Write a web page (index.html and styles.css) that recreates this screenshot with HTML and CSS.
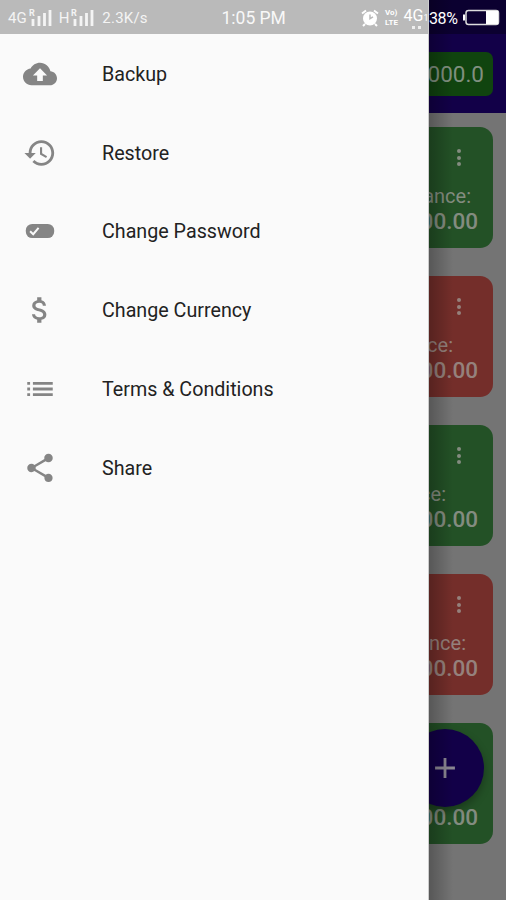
FILE: index.html
```html
<!DOCTYPE html>
<html lang="en">
<head>
    <meta charset="UTF-8">
    <meta name="viewport" content="width=device-width, initial-scale=1.0">
    <title>Accounts</title>
    <link rel="stylesheet" href="styles.css">
</head>
<body>
    <!-- Status bar -->
    <div class="status-bar">
        <div class="network">
            <span>4G</span>
            <svg class="signal" viewBox="0 0 23 20"><text x="0" y="8">R</text><path d="M4 11v7M10 8v10M15.5 5v13M21 2v16"/></svg>
            <span class="net-h">H</span>
            <svg class="signal" viewBox="0 0 23 20"><text x="0" y="8">R</text><path d="M4 11v7M10 8v10M15.5 5v13M21 2v16"/></svg>
            <span class="speed">2.3K/s</span>
        </div>
        <div class="clock">1:05 PM</div>
        <div class="indicators">
            <svg class="alarm" viewBox="0 0 18 18"><circle cx="9" cy="9.5" r="7"/><path class="bells" d="M1 4.5l4-3M17 4.5l-4-3M4 15l-2 2M14 15l2 2"/><path class="hands" d="M9 5.5v4.2l3-1.8"/></svg>
            <div class="volte"><span>Vo)</span><span>LTE</span></div>
            <div class="data"><span>4G<small>1</small></span><i></i></div>
            <span class="percent">38%</span>
            <svg class="battery" viewBox="0 0 38 18"><rect x="4" y="1.5" width="32.5" height="14" rx="2.5"/><path d="M24 2h12v13H24zM1 5.5h2v6H1z"/></svg>
        </div>
    </div>

    <div class="screen">
        <!-- Menu drawer -->
        <nav class="drawer">
            <a class="item">
                <svg viewBox="0 0 24 24"><path d="M19.35 10.04C18.67 6.59 15.64 4 12 4 9.11 4 6.6 5.64 5.35 8.04 2.34 8.36 0 10.91 0 14c0 3.31 2.69 6 6 6h13c2.76 0 5-2.24 5-5 0-2.64-2.05-4.78-4.65-4.96zM14 13v4h-4v-4H7l5-5 5 5h-3z"/></svg>
                <span>Backup</span>
            </a>
            <a class="item">
                <svg viewBox="0 0 24 24"><path d="M13 3c-4.97 0-9 4.03-9 9H1l3.89 3.89.07.14L9 12H6c0-3.87 3.13-7 7-7s7 3.13 7 7-3.13 7-7 7c-1.93 0-3.68-.79-4.94-2.06l-1.42 1.42C8.27 19.99 10.51 21 13 21c4.97 0 9-4.03 9-9s-4.03-9-9-9zm-1 5v5l4.28 2.54.72-1.21-3.5-2.08V8H12z"/></svg>
                <span>Restore</span>
            </a>
            <a class="item">
                <svg viewBox="0 0 24 24"><rect x="2" y="7" width="20" height="10" rx="4.5"/><path class="check" d="M5 12.2l2.2 2.1L11 9.8"/></svg>
                <span>Change Password</span>
            </a>
            <a class="item">
                <svg viewBox="0 0 24 24"><path d="M11.8 10.9c-2.27-.59-3-1.2-3-2.15 0-1.09 1.01-1.85 2.7-1.85 1.78 0 2.44.85 2.5 2.1h2.21c-.07-1.72-1.12-3.3-3.21-3.81V3h-3v2.16c-1.94.42-3.5 1.68-3.5 3.61 0 2.31 1.91 3.46 4.7 4.13 2.5.6 3 1.48 3 2.41 0 .69-.49 1.79-2.7 1.79-2.06 0-2.87-.92-2.98-2.1h-2.2c.12 2.19 1.76 3.42 3.68 3.83V21h3v-2.15c1.95-.37 3.5-1.5 3.5-3.55 0-2.84-2.43-3.81-4.7-4.4z"/></svg>
                <span>Change Currency</span>
            </a>
            <a class="item">
                <svg viewBox="0 0 24 24"><path d="M3 13h2v-2H3v2zm0 4h2v-2H3v2zm0-8h2V7H3v2zm4 4h14v-2H7v2zm0 4h14v-2H7v2zM7 7v2h14V7H7z"/></svg>
                <span>Terms &amp; Conditions</span>
            </a>
            <a class="item">
                <svg viewBox="0 0 24 24"><path d="M18 16.08c-.76 0-1.44.3-1.96.77L8.91 12.7c.05-.23.09-.46.09-.7s-.04-.47-.09-.7l7.05-4.11c.54.5 1.25.81 2.04.81 1.66 0 3-1.34 3-3s-1.34-3-3-3-3 1.34-3 3c0 .24.04.47.09.7L8.04 9.81C7.5 9.31 6.79 9 6 9c-1.66 0-3 1.34-3 3s1.34 3 3 3c.79 0 1.5-.31 2.04-.81l7.12 4.16c-.05.21-.08.43-.08.65 0 1.61 1.31 2.92 2.92 2.92s2.92-1.31 2.92-2.92-1.31-2.92-2.92-2.92z"/></svg>
                <span>Share</span>
            </a>
        </nav>

        <!-- Dimmed page next to the drawer -->
        <main class="page">
            <header class="top">
                <div class="total">000.0</div>
            </header>
            <div class="cards">
                <div class="card green">
                    <div class="dots"><i></i><i></i><i></i></div>
                    <span class="label">ance:</span>
                    <b>00.00</b>
                </div>
                <div class="card red">
                    <div class="dots"><i></i><i></i><i></i></div>
                    <span class="label short">ce:</span>
                    <b>00.00</b>
                </div>
                <div class="card green">
                    <div class="dots"><i></i><i></i><i></i></div>
                    <span class="label shorter">ce:</span>
                    <b>00.00</b>
                </div>
                <div class="card red">
                    <div class="dots"><i></i><i></i><i></i></div>
                    <span class="label medium">nce:</span>
                    <b>00.00</b>
                </div>
                <div class="card green last">
                    <b>00.00</b>
                </div>
            </div>
            <div class="fab"><svg viewBox="0 0 24 24"><path d="M19 13h-6v6h-2v-6H5v-2h6V5h2v6h6v2z"/></svg></div>
        </main>
    </div>
</body>
</html>
```
FILE: styles.css
```css
* {
    margin: 0;
    padding: 0;
    box-sizing: border-box;
}

body {
    position: relative;
    width: 506px;
    height: 900px;
    overflow: hidden;
    font-family: Roboto, sans-serif;
    background: #747474;
}

/* Status bar */
.status-bar {
    position: absolute;
    top: 0;
    left: 0;
    z-index: 3;
    display: flex;
    justify-content: space-between;
    align-items: center;
    width: 100%;
    height: 34px;
    padding: 2px 6px 0 8px;
    color: #fff;
    font-size: 15px;
}

.network,
.indicators {
    display: flex;
    align-items: center;
}

.network {
    width: 213.5px;
    color: #f4f4f4;
}

.signal {
    width: 23px;
    height: 20px;
    margin-left: 2px;
}

.signal text {
    font-size: 9px;
    font-weight: 700;
    fill: #f4f4f4;
}

.signal path {
    stroke: #f4f4f4;
    stroke-width: 2.8;
}

.net-h {
    margin-left: 7px;
}

.speed {
    margin-left: 8px;
    letter-spacing: 0.2px;
}

.clock {
    font-size: 17.5px;
    flex: 1;
    color: #f8f8f8;
}

.alarm {
    width: 18px;
    height: 18px;
    margin-right: 6px;
    fill: #fff;
}

.bells {
    stroke: #fff;
    stroke-width: 2;
}

.hands {
    fill: none;
    stroke: #bababa;
    stroke-width: 1.5;
}

.volte {
    display: flex;
    flex-direction: column;
    width: 18px;
    font-size: 8px;
    font-weight: 700;
    line-height: 10px;
}

.data {
    display: flex;
    flex-direction: column;
    align-items: center;
    width: 26px;
    line-height: 15px;
    font-size: 16px;
    white-space: nowrap;
}

.data small {
    font-size: 9px;
}

.data i {
    width: 9px;
    height: 3px;
    border: solid #eee;
    border-width: 0 3px;
}

.percent {
    width: 33px;
    font-size: 16px;
    letter-spacing: -0.4px;
}

.battery {
    width: 38px;
    height: 18px;
    fill: #fff;
}

.battery rect {
    fill: none;
    stroke: #ddd;
    stroke-width: 1.5;
}

.screen {
    display: flex;
    height: 100%;
}

/* Drawer */
.drawer {
    flex: none;
    width: 429px;
    padding-top: 34.5px;
    background: linear-gradient(#bababa 34px, #fafafa 34px);
    border-right: 1px solid #ccc;
}

.item {
    display: flex;
    align-items: center;
    height: 78.75px;
    padding-left: 23px;
    font-size: 19.7px;
    color: #222;
}

.item span {
    padding-top: 1px;
}

.item svg {
    width: 34px;
    height: 34px;
    margin-right: 45px;
    fill: #858585;
}

.item .check {
    fill: none;
    stroke: #fafafa;
    stroke-width: 1.4;
}

/* Page behind the drawer */
.page {
    position: relative;
    flex: 1;
    overflow: hidden;
    background: #747474;
}

.page::after {
    content: '';
    position: absolute;
    top: 0;
    left: 0;
    width: 24px;
    height: 100%;
    background: linear-gradient(to right, rgba(0, 0, 0, 0.25), transparent);
}

.top {
    height: 113px;
    padding: 52px 13px 0 0;
    background: linear-gradient(#0b0030 34px, #120048 34px);
}

.total {
    display: flex;
    justify-content: flex-end;
    align-items: center;
    height: 44px;
    padding-right: 9px;
    border-radius: 0 7px 7px 0;
    background: #10440f;
    color: #809080;
    font-size: 22.5px;
}

.cards {
    display: flex;
    flex-direction: column;
    gap: 28.5px;
    padding: 14px 13px 0 0;
}

.card {
    display: flex;
    flex-direction: column;
    align-items: flex-end;
    height: 120.5px;
    padding: 22px 15px 0 0;
    border-radius: 0 13px 13px 0;
    color: #838c80;
    white-space: nowrap;
}

.green {
    background: #235126;
}

.red {
    background: #742e2a;
}

.dots {
    display: flex;
    flex-direction: column;
    gap: 2.5px;
    margin-right: 17px;
}

.dots i {
    width: 4px;
    height: 4px;
    border-radius: 50%;
    background: #838c80;
}

.label {
    margin: 18px 7px 0 0;
    font-size: 20px;
    line-height: 24px;
}

.medium {
    margin-right: 12px;
}

.short {
    margin-right: 25px;
}

.shorter {
    margin-right: 32px;
}

.card b {
    font-size: 22.5px;
    font-weight: 500;
    line-height: 26px;
}

.red .label,
.red b {
    color: #95817c;
}

.red .dots i {
    background: #95817c;
}

.last {
    padding-top: 81px;
}

/* Add button */
.fab {
    position: absolute;
    top: 729px;
    left: -23px;
    display: flex;
    justify-content: center;
    align-items: center;
    width: 78px;
    height: 78px;
    border-radius: 50%;
    background: #120048;
    box-shadow: 0 4px 8px rgba(0, 0, 0, 0.3);
}

.fab svg {
    width: 34px;
    height: 34px;
    fill: #8b8792;
}
```
